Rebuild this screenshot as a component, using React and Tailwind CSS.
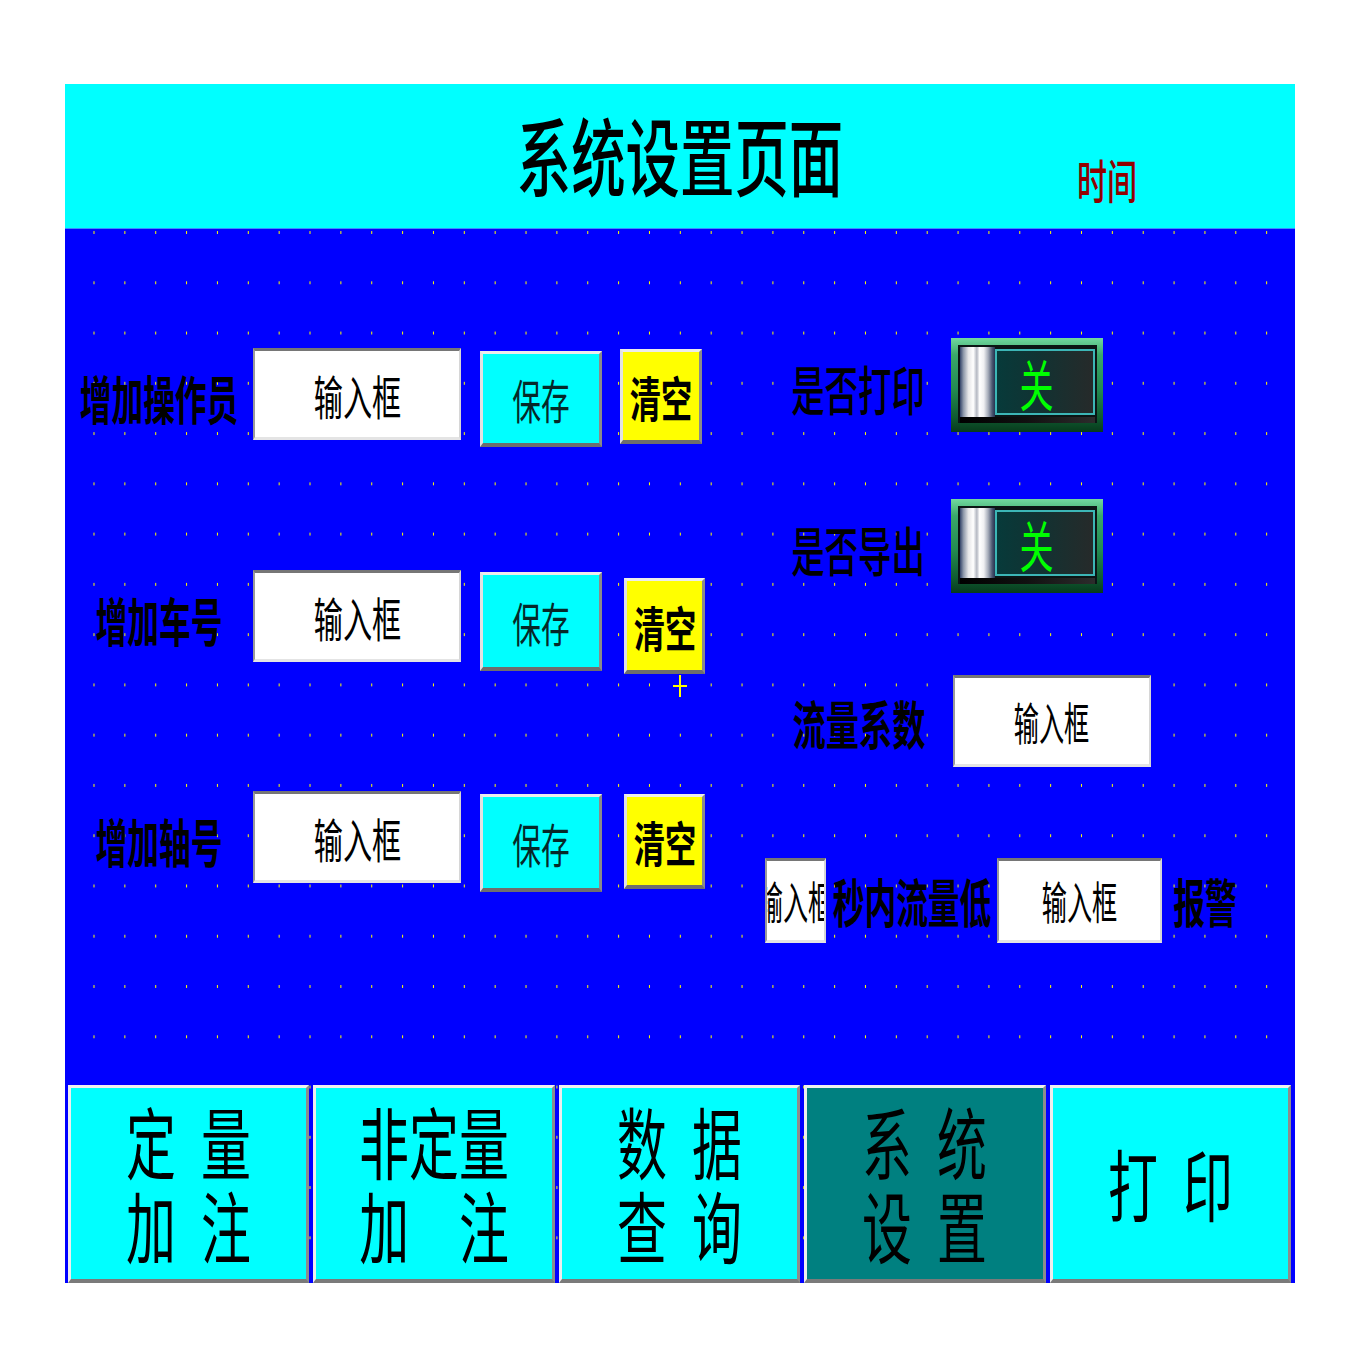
import React from 'react'

// scaled text: the original HMI font is a narrow CJK face, so we squeeze Noto horizontally
function Txt({ box = '', text = '', children }) {
  return (
    <div className={`flex items-center justify-center ${box}`}>
      <span className={`block shrink-0 whitespace-nowrap leading-none ${text}`}>{children}</span>
    </div>
  )
}

function InputBox({ box = '', text = 'text-[47px] scale-x-[0.62]' }) {
  return (
    <div
      className={`bg-white border-t-[3px] border-t-[#767676] border-l-[2px] border-l-[#9a9a9a] border-r-[2px] border-r-[#d6d6d6] border-b-[3px] border-b-[#e4e4e4] overflow-hidden flex items-center justify-center ${box}`}
    >
      <span className={`block shrink-0 whitespace-nowrap leading-none text-black ${text}`}>输入框</span>
    </div>
  )
}

function RaisedBtn({ box = '', children }) {
  return (
    <div
      className={`relative border-t-[3px] border-l-[3px] border-t-[#ececec] border-l-[#e2e2e2] border-r-[3px] border-r-[#8a8a8a] border-b-[4px] border-b-[#6e6e6e] flex items-center justify-center ${box}`}
    >
      {children}
    </div>
  )
}

function Toggle() {
  return (
    <div className="w-[152px] h-[94px] pt-[7px] pb-[9px] pl-[7px] pr-[6px] bg-[linear-gradient(180deg,#72d8a0_0%,#3aa86a_18%,#238a50_55%,#0f5a30_85%,#073a1c_100%)]">
      <div className="w-full h-full bg-[#0b1515] flex flex-col pt-[2px] px-[2px]">
        <div className="h-[70px] flex">
          <div className="w-[35px] h-full bg-[linear-gradient(90deg,#34446a_0%,#8e98aa_10%,#e6e6e8_24%,#ffffff_38%,#b4b8c2_48%,#ffffff_56%,#f0f0f2_68%,#a8aebb_80%,#4a5670_92%,#263250_100%)]" />
          <div className="flex-1 my-[2px] border-2 border-[#3cb6b6] bg-[linear-gradient(90deg,#073a3a_0%,#123232_45%,#262a2a_100%)] flex items-center justify-center pr-[16px]">
            <span className="block shrink-0 whitespace-nowrap leading-none text-[55px] scale-x-[0.62] text-[#00ff00]">关</span>
          </div>
        </div>
        <div className="h-[6px] bg-[linear-gradient(90deg,#000000_0%,#111111_50%,#2c2c2c_100%)]" />
      </div>
    </div>
  )
}

function NavBtn({ dark, children }) {
  return (
    <div
      className={`flex-1 h-full border-t-[3px] border-l-[3px] border-t-[#f0f0f0] border-l-[#eeeeee] border-r-[3px] border-r-[#8c8c8c] border-b-[4px] border-b-[#7a7a7a] flex flex-col items-center justify-center pb-[4px] ${
        dark ? 'bg-[#008080]' : 'bg-[#00ffff]'
      }`}
    >
      {children}
    </div>
  )
}

function NavLine({ children }) {
  return (
    <span className="block shrink-0 whitespace-nowrap leading-[84px] h-[84px] text-[78px] scale-x-[0.64] text-black">
      {children}
    </span>
  )
}

const LEFT_ROWS = [
  {
    label: '增加操作员',
    row: 'mt-[119px]',
    save: 'ml-[19px] mt-[3px] w-[122px] h-[96px]',
    clear: 'ml-[18px] mt-[1px] w-[82px] h-[95px]',
  },
  {
    label: '增加车号',
    row: 'mt-[123px]',
    save: 'ml-[19px] mt-[2px] w-[122px] h-[99px]',
    clear: 'ml-[22px] mt-[8px] w-[81px] h-[96px]',
    cross: true,
  },
  {
    label: '增加轴号',
    row: 'mt-[122px]',
    save: 'ml-[19px] mt-[3px] w-[122px] h-[98px]',
    clear: 'ml-[22px] mt-[3px] w-[81px] h-[95px]',
  },
]

export default function App() {
  return (
    <div className="min-h-[1361px] bg-white pt-[84px] pl-[65px] font-['Noto_Sans_CJK_SC',sans-serif]">
      <div className="w-[1230px]">
        {/* Header */}
        <div className="h-[145px] bg-[#00ffff] flex border-b border-b-[#3a8cff]">
          <div className="w-[452px]" />
          <Txt box="w-[325px] h-full pb-[8px]" text="text-[85px] font-medium scale-x-[0.64] text-black">系统设置页面</Txt>
          <div className="w-[235px]" />
          <Txt box="w-[60px] h-[47px] mt-[71px]" text="text-[47px] font-medium scale-x-[0.64] text-[#920000]">时间</Txt>
        </div>

        {/* Blue work area with yellow grid dots */}
        <div className="h-[1054px] bg-[#0000ff] bg-[radial-gradient(1px_1.7px_at_50%_50%,#ffff00_80%,#0000ff00_100%)] bg-[length:30.86px_50.28px] bg-[position:13.57px_-21.64px] flex flex-col">
          <div className="h-[856px] flex">
            {/* Left column */}
            <div className="w-[700px] flex flex-col">
              {LEFT_ROWS.map(r => (
                <div key={r.label} className={`h-[99px] flex items-start ${r.row}`}>
                  <Txt box="w-[188px] h-[92px] pt-[8px]" text="text-[52px] font-semibold scale-x-[0.61] text-black">
                    {r.label}
                  </Txt>
                  <InputBox box="w-[208px] h-[92px]" />
                  <RaisedBtn box={`bg-[#00ffff] ${r.save}`}>
                    <span className="block shrink-0 whitespace-nowrap leading-none text-[47px] scale-x-[0.61] text-[#062828]">保存</span>
                  </RaisedBtn>
                  <RaisedBtn box={`bg-[#ffff00] ${r.clear}`}>
                    <span className="block shrink-0 whitespace-nowrap leading-none text-[48px] font-bold scale-x-[0.65] text-black">清空</span>
                    {r.cross && (
                      <div className="absolute left-[46px] top-[94px] w-[14px] h-[22px]">
                        <div className="absolute left-[6px] top-0 w-[2px] h-[22px] bg-[#ffff00]" />
                        <div className="absolute left-0 top-[10px] w-[14px] h-[2px] bg-[#ffff00]" />
                      </div>
                    )}
                  </RaisedBtn>
                </div>
              ))}
            </div>

            {/* Right column */}
            <div className="flex-1 flex flex-col">
              <div className="mt-[109px] h-[94px] flex">
                <Txt box="w-[186px] h-full pt-[6px]" text="text-[53px] font-medium scale-x-[0.63] text-black">是否打印</Txt>
                <Toggle />
              </div>
              <div className="mt-[67px] h-[94px] flex">
                <Txt box="w-[186px] h-full pt-[6px]" text="text-[53px] font-medium scale-x-[0.63] text-black">是否导出</Txt>
                <Toggle />
              </div>
              <div className="mt-[82px] h-[92px] flex">
                <Txt box="w-[188px] h-full pt-[3px]" text="text-[52px] font-semibold scale-x-[0.64] text-black">流量系数</Txt>
                <InputBox box="w-[198px] h-[92px]" text="text-[45px] scale-x-[0.56]" />
              </div>
              <div className="mt-[91px] h-[85px] flex">
                <InputBox box="w-[61px] h-[85px]" text="text-[45px] scale-x-[0.56]" />
                <Txt box="w-[171px] h-full pt-[1px]" text="text-[52px] font-semibold scale-x-[0.61] text-black">秒内流量低</Txt>
                <InputBox box="w-[165px] h-[85px]" text="text-[45px] scale-x-[0.56]" />
                <Txt box="w-[85px] h-full pt-[1px]" text="text-[52px] font-semibold scale-x-[0.61] text-black">报警</Txt>
              </div>
            </div>
          </div>

          {/* Bottom navigation */}
          <div className="h-[198px] flex gap-[4px] pl-[3px] pr-[4px]">
            <NavBtn>
              <NavLine>定{'\u2002'}量</NavLine>
              <NavLine>加{'\u2002'}注</NavLine>
            </NavBtn>
            <NavBtn>
              <NavLine>非定量</NavLine>
              <NavLine>加{'\u3000'}注</NavLine>
            </NavBtn>
            <NavBtn>
              <NavLine>数{'\u2002'}据</NavLine>
              <NavLine>查{'\u2002'}询</NavLine>
            </NavBtn>
            <NavBtn dark>
              <NavLine>系{'\u2002'}统</NavLine>
              <NavLine>设{'\u2002'}置</NavLine>
            </NavBtn>
            <NavBtn>
              <NavLine>打{'\u2002'}印</NavLine>
            </NavBtn>
          </div>
        </div>
      </div>
    </div>
  )
}
